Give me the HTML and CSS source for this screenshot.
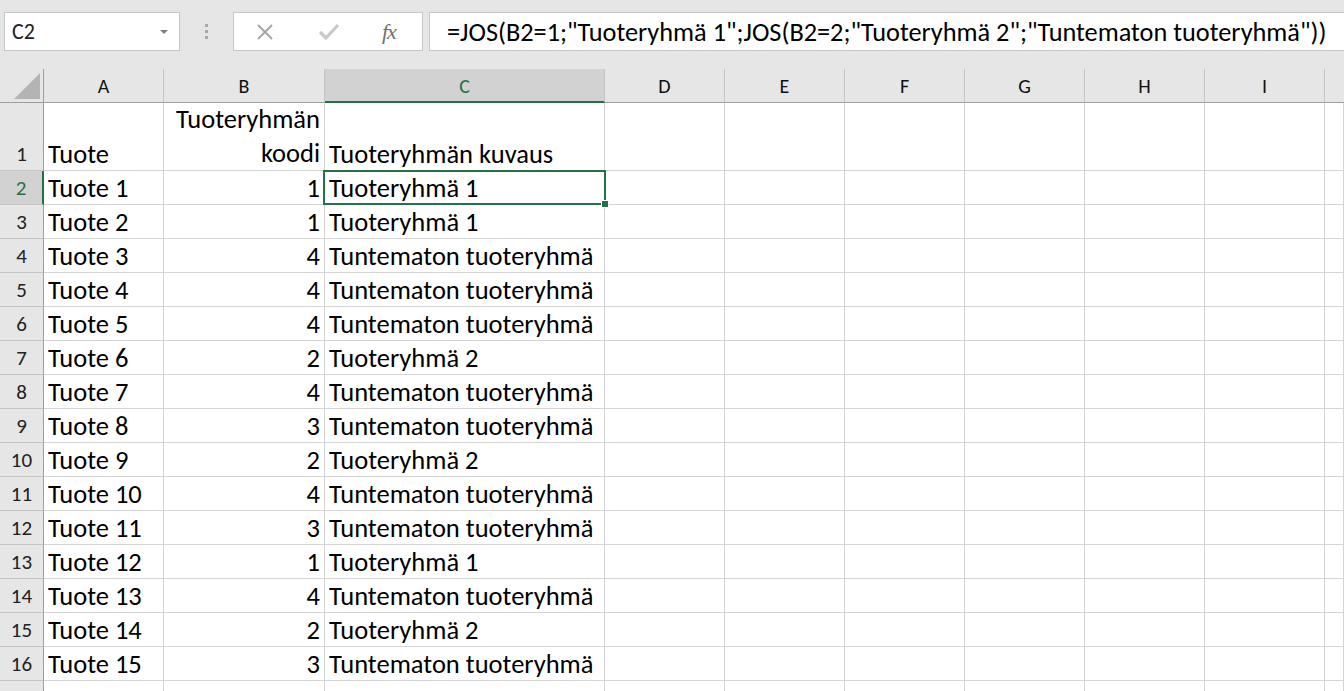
FILE: index.html
```html
<!DOCTYPE html>
<html lang="fi">
<head>
<meta charset="utf-8">
<title>Excel</title>
<link rel="stylesheet" href="styles.css">
</head>
<body>
<div class="toolbar">
  <div class="namebox">
    <span class="nb-text">C2</span>
    <svg class="caret" width="10" height="6" viewBox="0 0 10 6"><path d="M1 1 L9 1 L5 5 Z" fill="#808080"/></svg>
  </div>
  <div class="grip">
    <span class="dot"></span><span class="dot"></span><span class="dot"></span>
  </div>
  <div class="fbuttons">
    <svg class="ico-x" width="20" height="20" viewBox="0 0 20 20"><path d="M3 3 L17 17 M17 3 L3 17" stroke="#a6a6a6" stroke-width="2" fill="none"/></svg>
    <svg class="ico-check" width="22" height="20" viewBox="0 0 22 20"><path d="M2 10 L8 16 L20 3" stroke="#c8c8c8" stroke-width="3.2" fill="none"/></svg>
    <span class="fx">fx</span>
  </div>
  <div class="formula">=JOS(B2=1;"Tuoteryhmä 1";JOS(B2=2;"Tuoteryhmä 2";"Tuntematon tuoteryhmä"))</div>
</div>

<div class="sheet">
  <div class="h corner"><span class="tri"></span></div>
  <div class="h">A</div><div class="h">B</div><div class="h sel">C</div><div class="h">D</div><div class="h">E</div><div class="h">F</div><div class="h">G</div><div class="h">H</div><div class="h">I</div><div class="h last"></div>

  <div class="r">1</div><div class="c">Tuote</div><div class="c num wrap">Tuoteryhmän<br>koodi</div><div class="c">Tuoteryhmän kuvaus</div><div class="c"></div><div class="c"></div><div class="c"></div><div class="c"></div><div class="c"></div><div class="c"></div><div class="c"></div>

  <div class="r rsel">2</div><div class="c">Tuote 1</div><div class="c num">1</div><div class="c">Tuoteryhmä 1</div><div class="c"></div><div class="c"></div><div class="c"></div><div class="c"></div><div class="c"></div><div class="c"></div><div class="c"></div>

  <div class="r">3</div><div class="c">Tuote 2</div><div class="c num">1</div><div class="c">Tuoteryhmä 1</div><div class="c"></div><div class="c"></div><div class="c"></div><div class="c"></div><div class="c"></div><div class="c"></div><div class="c"></div>

  <div class="r">4</div><div class="c">Tuote 3</div><div class="c num">4</div><div class="c">Tuntematon tuoteryhmä</div><div class="c"></div><div class="c"></div><div class="c"></div><div class="c"></div><div class="c"></div><div class="c"></div><div class="c"></div>

  <div class="r">5</div><div class="c">Tuote 4</div><div class="c num">4</div><div class="c">Tuntematon tuoteryhmä</div><div class="c"></div><div class="c"></div><div class="c"></div><div class="c"></div><div class="c"></div><div class="c"></div><div class="c"></div>

  <div class="r">6</div><div class="c">Tuote 5</div><div class="c num">4</div><div class="c">Tuntematon tuoteryhmä</div><div class="c"></div><div class="c"></div><div class="c"></div><div class="c"></div><div class="c"></div><div class="c"></div><div class="c"></div>

  <div class="r">7</div><div class="c">Tuote 6</div><div class="c num">2</div><div class="c">Tuoteryhmä 2</div><div class="c"></div><div class="c"></div><div class="c"></div><div class="c"></div><div class="c"></div><div class="c"></div><div class="c"></div>

  <div class="r">8</div><div class="c">Tuote 7</div><div class="c num">4</div><div class="c">Tuntematon tuoteryhmä</div><div class="c"></div><div class="c"></div><div class="c"></div><div class="c"></div><div class="c"></div><div class="c"></div><div class="c"></div>

  <div class="r">9</div><div class="c">Tuote 8</div><div class="c num">3</div><div class="c">Tuntematon tuoteryhmä</div><div class="c"></div><div class="c"></div><div class="c"></div><div class="c"></div><div class="c"></div><div class="c"></div><div class="c"></div>

  <div class="r">10</div><div class="c">Tuote 9</div><div class="c num">2</div><div class="c">Tuoteryhmä 2</div><div class="c"></div><div class="c"></div><div class="c"></div><div class="c"></div><div class="c"></div><div class="c"></div><div class="c"></div>

  <div class="r">11</div><div class="c">Tuote 10</div><div class="c num">4</div><div class="c">Tuntematon tuoteryhmä</div><div class="c"></div><div class="c"></div><div class="c"></div><div class="c"></div><div class="c"></div><div class="c"></div><div class="c"></div>

  <div class="r">12</div><div class="c">Tuote 11</div><div class="c num">3</div><div class="c">Tuntematon tuoteryhmä</div><div class="c"></div><div class="c"></div><div class="c"></div><div class="c"></div><div class="c"></div><div class="c"></div><div class="c"></div>

  <div class="r">13</div><div class="c">Tuote 12</div><div class="c num">1</div><div class="c">Tuoteryhmä 1</div><div class="c"></div><div class="c"></div><div class="c"></div><div class="c"></div><div class="c"></div><div class="c"></div><div class="c"></div>

  <div class="r">14</div><div class="c">Tuote 13</div><div class="c num">4</div><div class="c">Tuntematon tuoteryhmä</div><div class="c"></div><div class="c"></div><div class="c"></div><div class="c"></div><div class="c"></div><div class="c"></div><div class="c"></div>

  <div class="r">15</div><div class="c">Tuote 14</div><div class="c num">2</div><div class="c">Tuoteryhmä 2</div><div class="c"></div><div class="c"></div><div class="c"></div><div class="c"></div><div class="c"></div><div class="c"></div><div class="c"></div>

  <div class="r">16</div><div class="c">Tuote 15</div><div class="c num">3</div><div class="c">Tuntematon tuoteryhmä</div><div class="c"></div><div class="c"></div><div class="c"></div><div class="c"></div><div class="c"></div><div class="c"></div><div class="c"></div>

  <div class="r"></div><div class="c"></div><div class="c"></div><div class="c"></div><div class="c"></div><div class="c"></div><div class="c"></div><div class="c"></div><div class="c"></div><div class="c"></div><div class="c"></div>

  <div class="selection"><span class="handle"></span></div>
</div>
</body>
</html>
```

FILE: styles.css
```css
* { box-sizing: border-box; }
html, body { margin: 0; padding: 0; }
body {
  width: 1344px;
  height: 691px;
  overflow: hidden;
  background: #ffffff;
  font-family: Carlito, Lato, "Open Sans", sans-serif;
  color: #000;
}

/* toolbar */
.toolbar {
  height: 69px;
  background: #e6e6e6;
  display: flex;
  align-items: flex-start;
  padding: 12px 0 0 4px;
}
.namebox {
  width: 176px;
  height: 39px;
  background: #fff;
  border: 1px solid #c6c6c6;
  display: flex;
  align-items: center;
  justify-content: space-between;
  padding: 0 10px 0 7px;
  font-size: 22px;
  color: #222;
}
.grip {
  width: 53px;
  height: 39px;
  display: flex;
  flex-direction: column;
  align-items: center;
  justify-content: center;
  gap: 3px;
}
.dot {
  width: 3px;
  height: 3px;
  background: #a8a8a8;
}
.fbuttons {
  width: 190px;
  height: 39px;
  background: #fff;
  border: 1px solid #c6c6c6;
  display: flex;
  align-items: center;
  padding: 0 0 0 21px;
}
.ico-x { margin-right: 43px; }
.ico-check { margin-right: 42px; }
.fx {
  font-family: "Liberation Serif", "DejaVu Serif", serif;
  font-style: italic;
  font-size: 22px;
  color: #6f6f6f;
  letter-spacing: -1px;
}
.formula {
  margin-left: 6px;
  flex: 1;
  height: 39px;
  background: #fff;
  border: 1px solid #c6c6c6;
  border-right: none;
  display: flex;
  align-items: center;
  padding-left: 17px;
  font-size: 26.3px;
  color: #000;
  white-space: nowrap;
  overflow: hidden;
}

/* sheet */
.sheet {
  position: relative;
  display: grid;
  grid-template-columns: 44px 120px 161px 280px repeat(6, 120px) 1fr;
  grid-template-rows: 34px 68px repeat(16, 34px);
}
.h {
  background: #e6e6e6;
  border-right: 1px solid #c4c4c4;
  border-bottom: 1px solid #9e9e9e;
  display: flex;
  align-items: center;
  justify-content: center;
  font-size: 20px;
  color: #111;
  padding-top: 1px;
}
.h.corner {
  border-right: 1px solid #9e9e9e;
  position: relative;
}
.tri {
  position: absolute;
  left: 14px;
  top: 4px;
  width: 26px;
  height: 26px;
  background: #b4b4b4;
  clip-path: polygon(100% 0, 100% 100%, 0 100%);
}
.h.sel {
  background: #d2d2d2;
  color: #217346;
  border-bottom: 2px solid #217346;
  padding-top: 2px;
}
.h.last { border-right: none; }
.r {
  background: #e6e6e6;
  border-right: 1px solid #9e9e9e;
  border-bottom: 1px solid #c4c4c4;
  display: flex;
  align-items: flex-end;
  justify-content: center;
  font-size: 21px;
  color: #222;
  padding-bottom: 5px;
  line-height: 1;
}
.r.rsel {
  background: #d2d2d2;
  color: #217346;
  border-right: 2px solid #217346;
}
.c {
  border-right: 1px solid #d4d4d4;
  border-bottom: 1px solid #d4d4d4;
  display: flex;
  align-items: flex-end;
  padding: 0 4px 3px 4px;
  font-size: 26.5px;
  line-height: 1;
  white-space: nowrap;
}
.c.num { justify-content: flex-end; text-align: right; }
.c.wrap { line-height: 34px; padding-bottom: 0; }
.selection {
  position: absolute;
  left: 323px;
  top: 101px;
  width: 283px;
  height: 35px;
  border: 2px solid #217346;
}
.handle {
  position: absolute;
  right: -5px;
  bottom: -5px;
  width: 8px;
  height: 8px;
  background: #217346;
  border: 1px solid #fff;
}
```
